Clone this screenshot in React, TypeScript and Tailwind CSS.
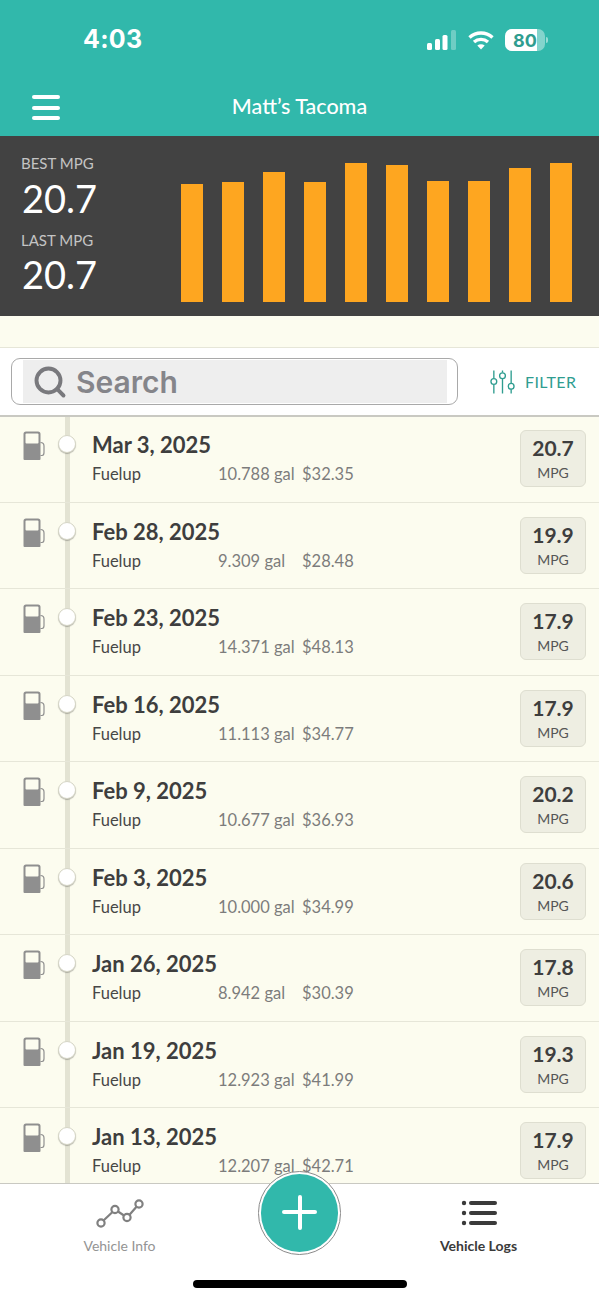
import { Search } from "lucide-react";

const bars = [118, 120, 130, 120, 139, 137, 121, 121, 134, 139];

const logs = [
    { date: "Mar 3, 2025", gal: "10.788 gal", cost: "$32.35", mpg: "20.7" },
    { date: "Feb 28, 2025", gal: "9.309 gal", cost: "$28.48", mpg: "19.9" },
    { date: "Feb 23, 2025", gal: "14.371 gal", cost: "$48.13", mpg: "17.9" },
    { date: "Feb 16, 2025", gal: "11.113 gal", cost: "$34.77", mpg: "17.9" },
    { date: "Feb 9, 2025", gal: "10.677 gal", cost: "$36.93", mpg: "20.2" },
    { date: "Feb 3, 2025", gal: "10.000 gal", cost: "$34.99", mpg: "20.6" },
    { date: "Jan 26, 2025", gal: "8.942 gal", cost: "$30.39", mpg: "17.8" },
    { date: "Jan 19, 2025", gal: "12.923 gal", cost: "$41.99", mpg: "19.3" },
    { date: "Jan 13, 2025", gal: "12.207 gal", cost: "$42.71", mpg: "17.9" },
];

function PumpIcon() {
    return (
        <svg width="23" height="29" viewBox="0 0 23 29" fill="none">
            <path d="M3 0.5h12a2.5 2.5 0 0 1 2.5 2.5v25a1 1 0 0 1-1 1H1.5a1 1 0 0 1-1-1V3A2.5 2.5 0 0 1 3 .5z" fill="#8f8f8f" />
            <rect x="2.5" y="2.5" width="13" height="10" rx="1" fill="#fcfcef" />
            <path d="M17.5 11.5c2.5 0 3.5 1.5 3.5 3.5v6.5c0 2-1 3-2 3h-1.5" stroke="#8f8f8f" strokeWidth="1.2" />
        </svg>
    );
}

function StatusBar() {
    return (
        <div className="h-[80px] flex items-center justify-between pl-[83px] pr-[51px]">
            <span className="text-[25px] font-bold text-white font-['Inter',sans-serif] tracking-[0.3px]">4:03</span>
            <div className="flex items-center gap-[11px]">
                <svg width="30" height="20" viewBox="0 0 30 20" fill="#ffffff">
                    <rect x="0" y="13" width="5" height="7" rx="1.5" />
                    <rect x="8" y="9" width="5" height="11" rx="1.5" />
                    <rect x="15.5" y="5" width="5" height="15" rx="1.5" />
                    <rect x="24" y="0" width="5" height="20" rx="1.5" opacity="0.3" />
                </svg>
                <svg width="26" height="20" viewBox="0 0 26 20" fill="none" stroke="#ffffff" strokeWidth="3.4">
                    <path d="M1.5 7.5c6.5-6 16.5-6 23 0" />
                    <path d="M6 12c4-3.5 10-3.5 14 0" />
                    <path d="M13 19.5l-3.7-4c2.2-1.6 5.2-1.6 7.4 0z" fill="#ffffff" stroke="none" />
                </svg>
                <div className="flex items-center gap-[1px]">
                    <div className="relative w-[40px] h-[22px] rounded-[7px] overflow-hidden bg-white/40">
                        <div className="h-full w-[32px] bg-white" />
                        <span className="absolute inset-0 flex items-center justify-center text-[18px] font-bold text-[#2f9d90] font-['Inter',sans-serif]">80</span>
                    </div>
                    <div className="w-[2px] h-[6px] rounded-r-full bg-white/50" />
                </div>
            </div>
        </div>
    );
}

function App() {
    return (
        <div className="relative w-[599px] h-[1300px] overflow-hidden flex flex-col bg-white font-['Lato',sans-serif]">
            <div className="h-[136px] bg-[#31b8ab] shrink-0">
                <StatusBar />
                <div className="relative h-[52px] flex items-center justify-center">
                    <div className="absolute left-[32px] top-[15px] flex flex-col gap-[6.5px]">
                        <div className="w-[28px] h-[4px] rounded-full bg-white" />
                        <div className="w-[28px] h-[4px] rounded-full bg-white" />
                        <div className="w-[28px] h-[4px] rounded-full bg-white" />
                    </div>
                    <span className="text-white text-[21.5px] font-medium">Matt’s Tacoma</span>
                </div>
            </div>

            <div className="h-[180px] bg-[#424242] shrink-0 flex pl-[21px] pr-[27px]">
                <div className="w-[160px] shrink-0 pt-[18px]">
                    <div className="text-[#c4c4c4] text-[15px] leading-[18px]">BEST MPG</div>
                    <div className="text-white text-[38px] leading-[46px] mt-[3px] ml-[1px]">20.7</div>
                    <div className="text-[#c4c4c4] text-[15px] leading-[18px] mt-[10px]">LAST MPG</div>
                    <div className="text-white text-[38px] leading-[46px] mt-[2px] ml-[1px]">20.7</div>
                </div>
                <div className="flex-1 flex items-end justify-between pb-[14px]">
                    {bars.map((h, i) => (
                        <div key={i} className="w-[22px] bg-[#fea620]" style={{ height: h }} />
                    ))}
                </div>
            </div>

            <div className="h-[32px] shrink-0 bg-[#fcfcef] border-b border-[#e6e6d8]" />

            <div className="h-[69px] shrink-0 bg-white border-b-2 border-[#c9c9c2] flex items-center pl-[11px]">
                <div className="w-[447px] h-[47px] rounded-[9px] border border-[#a9a9a9] bg-white pl-[11px] pr-[10px] py-[1px]">
                    <div className="h-full bg-[#eeeeee] flex items-center">
                        <Search className="ml-[9px] text-[#79797d]" size={36} strokeWidth={2.6} />
                        <span className="ml-[8px] text-[30px] font-semibold text-[#85858a] font-['Inter',sans-serif] leading-none">Search</span>
                    </div>
                </div>
                <svg className="ml-[32px]" width="25" height="26" viewBox="0 0 26 26" fill="none" stroke="#2f9d90" strokeWidth="1.4">
                    <path d="M4 1v8M4 16v9M13 1v2M13 10v15M22 1v13M22 21v4" />
                    <circle cx="4" cy="12.5" r="3" />
                    <circle cx="13" cy="6.5" r="3" />
                    <circle cx="22" cy="17.5" r="3" />
                </svg>
                <span className="ml-[10px] text-[#2f9d90] text-[16px] tracking-[0.4px]">FILTER</span>
            </div>

            <div className="relative flex-1 min-h-0 overflow-hidden bg-[#fcfcef]">
                <div className="absolute left-[65px] top-0 bottom-0 w-[5px] bg-[#e3e3d3]" />
                <div className="-mt-[1px]">
                    {logs.map((log) => (
                        <div key={log.date} className="relative h-[86.5px] border-b border-[#e6e6d8] flex">
                            <div className="pl-[23px] pt-[15px] w-[92px] shrink-0 relative">
                                <PumpIcon />
                                <div className="absolute left-[58px] top-[19px] w-[18px] h-[18px] rounded-full bg-white border border-[#d6d6c6] shadow-[0_1px_1px_rgba(0,0,0,0.25)]" />
                            </div>
                            <div className="flex-1 pt-[14px]">
                                <div className="text-[#3e3e3e] text-[22px] font-bold leading-[30px]">{log.date}</div>
                                <div className="flex mt-[1px] text-[16.5px] leading-[26px]">
                                    <span className="w-[126px] text-[#474747]">Fuelup</span>
                                    <span className="w-[84px] text-[#7c7c7c]">{log.gal}</span>
                                    <span className="text-[#7c7c7c]">{log.cost}</span>
                                </div>
                            </div>
                            <div className="w-[66px] h-[57px] mt-[14px] mr-[13px] shrink-0 rounded-[6px] bg-[#eeeee2] border border-[#deded0] flex flex-col items-center">
                                <span className="text-[#3e3e3e] text-[21px] font-bold leading-[26px] mt-[4px]">{log.mpg}</span>
                                <span className="text-[#565656] text-[14px] leading-[16px] mt-[4px]">MPG</span>
                            </div>
                        </div>
                    ))}
                </div>
            </div>

            <div className="relative h-[117px] shrink-0 bg-white border-t border-[#c9c9c2]">
                <div className="absolute left-0 top-[15px] w-[239px] flex flex-col items-center">
                    <svg width="48" height="30" viewBox="0 0 48 30" fill="none" stroke="#808080" strokeWidth="2.2">
                        <circle cx="5" cy="24" r="3.6" />
                        <circle cx="19" cy="10.5" r="3.6" />
                        <circle cx="31" cy="18.5" r="3.6" />
                        <circle cx="43" cy="5" r="3.6" />
                        <path d="M7.5 21.5L16.5 13M22 12.5L28 16.5M33.5 15.8L40.5 7.8" />
                    </svg>
                    <span className="mt-[6px] text-[14px] text-[#949494]">Vehicle Info</span>
                </div>
                <div className="absolute left-[359px] top-[14px] w-[239px] flex flex-col items-center">
                    <svg width="36" height="30" viewBox="0 0 36 30" fill="#3a3a3a">
                        <circle cx="3" cy="5" r="2.2" />
                        <circle cx="3" cy="15" r="2.2" />
                        <circle cx="3" cy="25" r="2.2" />
                        <rect x="8" y="3" width="28" height="4" rx="2" />
                        <rect x="8" y="13" width="28" height="4" rx="2" />
                        <rect x="8" y="23" width="28" height="4" rx="2" />
                    </svg>
                    <span className="mt-[7px] text-[14px] font-bold text-[#3a3a3a]">Vehicle Logs</span>
                </div>
                <div className="absolute left-[193px] bottom-[12px] w-[214px] h-[8px] rounded-full bg-black" />
            </div>

            <div className="absolute left-[258px] top-[1171px] w-[83px] h-[84px] rounded-full bg-white border border-[#8a8a8a] p-[2px]">
                <div className="relative w-full h-full rounded-full bg-[#31b8ab]">
                    <div className="absolute left-[21px] top-[36px] w-[35px] h-[4px] rounded-full bg-white" />
                    <div className="absolute left-[37px] top-[21px] w-[4px] h-[35px] rounded-full bg-white" />
                </div>
            </div>
        </div>
    );
}

export default App;
